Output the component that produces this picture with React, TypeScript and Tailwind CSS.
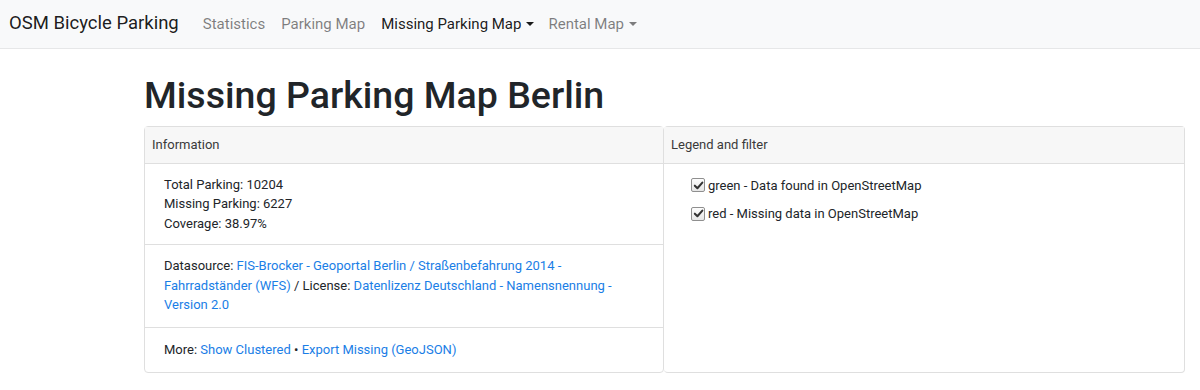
const Caret = () => (
  <span className="ml-[5px] inline-block align-[3px] border-x-[4px] border-t-[4px] border-x-transparent border-t-current" />
);

const Check = () => (
  <span className="mr-[3px] inline-flex h-[14px] w-[14px] items-center justify-center rounded-[2px] border border-[#8f8f8f] bg-gradient-to-b from-[#fdfdfd] to-[#e6e6e6]">
    <svg viewBox="0 0 12 12" className="h-[11px] w-[11px]">
      <path d="M2 6.2 L4.8 9 L10.2 2.8" fill="none" stroke="#333" strokeWidth="2.2" strokeLinecap="round" strokeLinejoin="round" />
    </svg>
  </span>
);

export default function App() {
  return (
    <div className="min-h-[390px] bg-white font-['Roboto','Liberation_Sans',sans-serif] text-[#212529]">
      <nav className="flex h-[49px] items-center border-b border-[#e6e7e8] bg-[#f8f9fa] px-[9px]">
        <span className="mr-[24px] text-[18.5px] text-black/90">OSM Bicycle Parking</span>
        <div className="flex gap-[16px] text-[15px] text-black/50">
          <span>Statistics</span>
          <span>Parking Map</span>
          <span className="text-black/90">
            Missing Parking Map
            <Caret />
          </span>
          <span className="-ml-[2px]">
            Rental Map
            <Caret />
          </span>
        </div>
      </nav>

      <main className="ml-[144px] w-[1041px]">
        <h1 className="mt-[24px] mb-[8px] text-[37.5px] leading-[45px] font-medium">Missing Parking Map Berlin</h1>

        <div className="flex text-[13px] leading-[19.5px]">
          <section className="w-[520px] rounded-[4px] border border-[#dfdfdf]">
            <header className="border-b border-[#dfdfdf] bg-[#f7f7f7] px-[7px] py-[8px] text-[#3a3a3a]">Information</header>
            <div className="border-b border-[#dfdfdf] px-[19px] py-[11px]">
              <div>Total Parking: 10204</div>
              <div>Missing Parking: 6227</div>
              <div>Coverage: 38.97%</div>
            </div>
            <div className="border-b border-[#dfdfdf] px-[19px] pt-[11px] pb-[12px]">
              Datasource: <a className="text-[#1a7ee6]">FIS-Brocker - Geoportal Berlin / Straßenbefahrung 2014 - Fahrradständer (WFS)</a> / License:{" "}
              <a className="text-[#1a7ee6]">Datenlizenz Deutschland - Namensnennung - Version 2.0</a>
            </div>
            <div className="px-[19px] pt-[12px] pb-[13px]">
              More: <a className="text-[#1a7ee6]">Show Clustered</a> • <a className="text-[#1a7ee6]">Export Missing (GeoJSON)</a>
            </div>
          </section>

          <section className="w-[521px] rounded-[4px] border border-l-0 border-[#dfdfdf]">
            <header className="border-b border-[#dfdfdf] bg-[#f7f7f7] px-[7px] py-[8px] text-[#3a3a3a]">Legend and filter</header>
            <div className="flex flex-col gap-[9px] px-[27px] py-[12px]">
              <label className="flex items-center">
                <Check />
                green - Data found in OpenStreetMap
              </label>
              <label className="flex items-center">
                <Check />
                red - Missing data in OpenStreetMap
              </label>
            </div>
          </section>
        </div>
      </main>
    </div>
  );
}
